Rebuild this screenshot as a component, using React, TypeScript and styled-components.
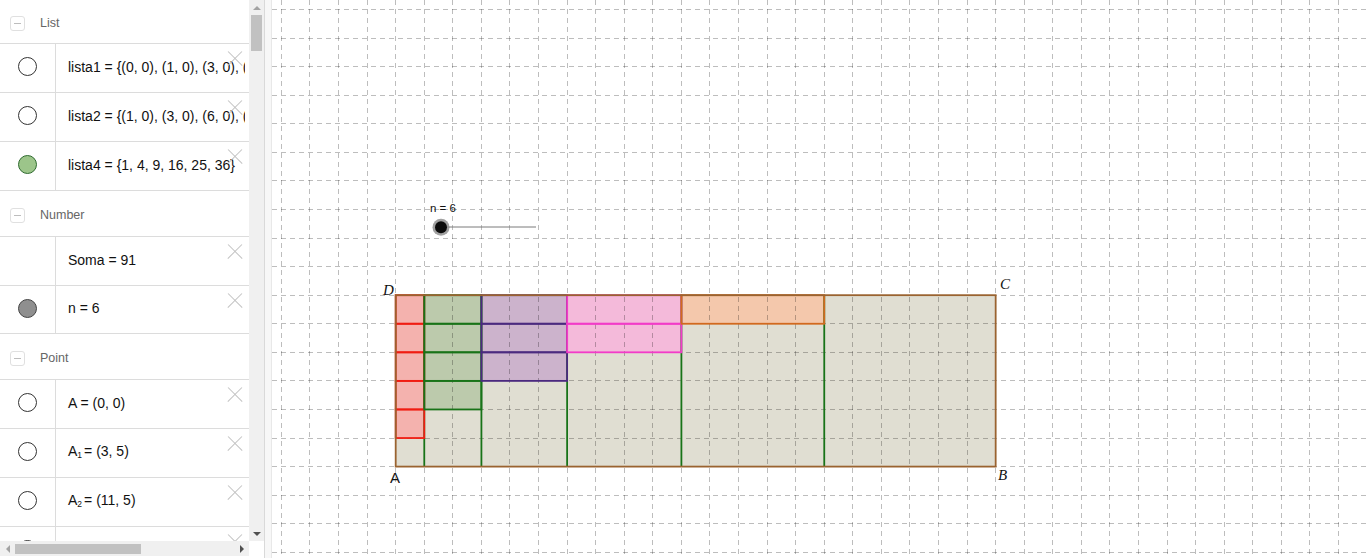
import React from 'react';
import styled, { createGlobalStyle } from 'styled-components';

const GlobalStyle = createGlobalStyle`
  html, body {
    margin: 0;
    padding: 0;
    background: #fff;
    overflow: hidden;
  }
  body {
    font-family: "Liberation Sans", Arial, sans-serif;
  }
`;

const Page = styled.div`
  display: flex;
  width: 1366px;
  height: 558px;
`;

const AlgebraPanel = styled.aside`
  flex: none;
  width: 264px;
  display: grid;
  grid-template-columns: 249px 15px;
  grid-template-rows: 541px 15px 2px;
`;

const ItemList = styled.div`
  overflow: hidden;
  background: #fff;
`;

const SectionHeader = styled.div<{ $h: number }>`
  display: flex;
  align-items: center;
  height: ${(p) => p.$h}px;
  padding-top: 3px;
  box-sizing: border-box;
  border-bottom: 1px solid #dcdcdc;
  color: #666;
  font-size: 12.5px;
`;

const CollapseBox = styled.span`
  width: 15px;
  height: 15px;
  margin: 0 15px 0 10px;
  box-sizing: border-box;
  border: 1px solid #e0e0e0;
  border-radius: 3px;
  display: flex;
  align-items: center;
  justify-content: center;
  &::after {
    content: '';
    width: 7px;
    height: 1px;
    background: #bdbdbd;
  }
`;

const ItemRow = styled.div<{ $h?: number }>`
  position: relative;
  display: flex;
  height: ${(p) => p.$h ?? 49}px;
  padding: 0 4px 3px 0;
  box-sizing: border-box;
  border-bottom: 1px solid #dcdcdc;
`;

const MarkerCell = styled.div`
  flex: none;
  width: 56px;
  margin-bottom: -3px;
  padding-bottom: 3px;
  box-sizing: border-box;
  border-right: 1px solid #dcdcdc;
  display: flex;
  align-items: center;
  justify-content: center;
`;

const Marker = styled.span<{ $fill: string; $edge: string }>`
  width: 19px;
  height: 19px;
  box-sizing: border-box;
  border-radius: 50%;
  border: 1px solid ${(p) => p.$edge};
  background: ${(p) => p.$fill};
`;

const Formula = styled.div`
  flex: 1;
  min-width: 0;
  display: flex;
  align-items: center;
  padding-left: 12px;
  font-size: 14px;
  color: #111;
  white-space: nowrap;
  overflow: hidden;
`;

const Sub = styled.sub`
  font-size: 8.5px;
  vertical-align: -2px;
  margin-right: 2px;
`;

const DeleteMark = styled.span`
  position: absolute;
  right: 7px;
  top: 7px;
  width: 15px;
  height: 15px;
  &::before,
  &::after {
    content: '';
    position: absolute;
    left: -2px;
    top: 7px;
    width: 20px;
    height: 1.4px;
    background: #c2c2c2;
  }
  &::before {
    transform: rotate(45deg);
  }
  &::after {
    transform: rotate(-45deg);
  }
`;

const VScroll = styled.div`
  background: #f0f0f0;
  display: flex;
  flex-direction: column;
`;

const HScroll = styled.div`
  background: #f0f0f0;
  display: flex;
  align-items: center;
`;

const ScrollCorner = styled.div`
  background: #fff;
`;

const ArrowButton = styled.span<{ $dir: 'up' | 'down' | 'left' | 'right'; $dim?: boolean }>`
  flex: none;
  width: 15px;
  height: 15px;
  display: flex;
  align-items: center;
  justify-content: center;
  &::after {
    content: '';
    width: 0;
    height: 0;
    ${(p) => {
      const c = p.$dim ? '#a3a3a3' : '#505050';
      switch (p.$dir) {
        case 'up':
          return `border-left: 4px solid transparent; border-right: 4px solid transparent; border-bottom: 4px solid ${c};`;
        case 'down':
          return `border-left: 4px solid transparent; border-right: 4px solid transparent; border-top: 4px solid ${c};`;
        case 'left':
          return `border-top: 4px solid transparent; border-bottom: 4px solid transparent; border-right: 4px solid ${c};`;
        default:
          return `border-top: 4px solid transparent; border-bottom: 4px solid transparent; border-left: 4px solid ${c};`;
      }
    }}
  }
`;

const VThumb = styled.span`
  width: 11px;
  height: 36px;
  margin-left: 2px;
  background: #c1c1c1;
`;

const HThumb = styled.span`
  width: 126px;
  height: 10px;
  background: #c1c1c1;
`;

const Filler = styled.span`
  flex: 1;
`;

const Splitter = styled.div`
  flex: none;
  width: 6px;
  background: #f7f7f7;
  border-left: 1px solid #d9d9d9;
  border-right: 1px solid #e8e8e8;
`;

const GraphicsView = styled.main`
  flex: 1;
  position: relative;
  background: #fff;
  overflow: hidden;
`;

const Board = styled.svg`
  display: block;
  width: 100%;
  height: 100%;
`;

type Item = {
  marker?: { fill: string; edge: string };
  text: React.ReactNode;
  h?: number;
};

type Section = { title: string; h: number; items: Item[] };

const hollow = { fill: '#fff', edge: '#333' };

const sections: Section[] = [
  {
    title: 'List',
    h: 44,
    items: [
      { marker: hollow, text: 'lista1 = {(0, 0), (1, 0), (3, 0), (6, 0), (10, 0), (15, 0)}' },
      { marker: hollow, text: 'lista2 = {(1, 0), (3, 0), (6, 0), (10, 0), (15, 0), (21, 0)}' },
      { marker: { fill: '#9cc58a', edge: '#2f6b2f' }, text: 'lista4 = {1, 4, 9, 16, 25, 36}' },
    ],
  },
  {
    title: 'Number',
    h: 46,
    items: [
      { text: 'Soma = 91' },
      { marker: { fill: '#8f8f8f', edge: '#444' }, text: 'n = 6', h: 48 },
    ],
  },
  {
    title: 'Point',
    h: 46,
    items: [
      { marker: hollow, text: 'A = (0, 0)' },
      { marker: hollow, text: <span>A<Sub>1</Sub>= (3, 5)</span> },
      { marker: hollow, text: <span>A<Sub>2</Sub>= (11, 5)</span> },
      { marker: hollow, text: '' },
    ],
  },
];

// board geometry, page pixels
const LEFT = 272;
const U = 28.57;
const OX = 395.7;
const OY = 466.6;
const px = (x: number) => OX + x * U - LEFT;
const py = (y: number) => OY - y * U;

const columns = [
  { fill: '#f4b2ae', edge: '#f01c12' },
  { fill: '#bccaac', edge: '#187318' },
  { fill: '#ccb3cc', edge: '#4b2a7f' },
  { fill: '#f4bada', edge: '#f23bc8' },
  { fill: '#f4c8ac', edge: '#d2691e' },
];

const squares = columns.flatMap((c, i) => {
  const k = i + 1;
  const start = (k * (k - 1)) / 2;
  return Array.from({ length: 6 - k }, (_, j) => ({
    x: px(start),
    y: py(6 - j),
    w: k * U,
    h: U,
    ...c,
  }));
});

const GridLines: React.FC = () => {
  const lines: React.ReactNode[] = [];
  for (let k = -4; k <= 34; k++) {
    const x = px(k);
    lines.push(<line key={`v${k}`} x1={x} y1={0} x2={x} y2={558} />);
  }
  for (let k = -3; k <= 16; k++) {
    const y = py(k);
    lines.push(<line key={`h${k}`} x1={0} y1={y} x2={1100} y2={y} />);
  }
  return (
    <g stroke="#000" strokeOpacity={0.26} strokeWidth={1} strokeDasharray="5 4" shapeRendering="crispEdges">
      {lines}
    </g>
  );
};

const Construction: React.FC = () => (
  <Board>
    <rect x={px(0)} y={py(6)} width={21 * U} height={6 * U} fill="#e0ded2" />
    {squares.map((s, i) => (
      <rect key={`f${i}`} x={s.x} y={s.y} width={s.w} height={s.h} fill={s.fill} />
    ))}
    <GridLines />
    {[1, 3, 6, 10, 15].map((x) => (
      <line key={`c${x}`} x1={px(x)} y1={py(0)} x2={px(x)} y2={py(6)} stroke="#187318" strokeWidth={1.8} />
    ))}
    {squares.map((s, i) => (
      <rect key={`e${i}`} x={s.x} y={s.y} width={s.w} height={s.h} fill="none" stroke={s.edge} strokeWidth={1.8} />
    ))}
    <rect x={px(0)} y={py(6)} width={21 * U} height={6 * U} fill="none" stroke="#9a6330" strokeWidth={1.8} />

    <g fontFamily='"Liberation Serif", serif' fontStyle="italic" fontSize={15} fill="#111">
      <text x={383 - LEFT} y={295}>D</text>
      <text x={1000 - LEFT} y={289}>C</text>
      <text x={998 - LEFT} y={480}>B</text>
    </g>
    <text x={390 - LEFT} y={483} fontFamily='"Liberation Sans", sans-serif' fontSize={15} fill="#111">
      A
    </text>

    <text x={430 - LEFT} y={212} fontFamily='"Liberation Sans", sans-serif' fontSize={11.5} fill="#111">
      n = 6
    </text>
    <line x1={441 - LEFT} y1={227} x2={536 - LEFT} y2={227} stroke="#7a7a7a" strokeWidth={1} />
    <circle cx={441 - LEFT} cy={227.3} r={8.5} fill="#8a8a8a" fillOpacity={0.8} />
    <circle cx={441 - LEFT} cy={227.3} r={6} fill="#0d0d0d" />
  </Board>
);

export default function App() {
  return (
    <>
      <GlobalStyle />
      <Page>
        <AlgebraPanel>
          <ItemList>
            {sections.map((sec) => (
              <React.Fragment key={sec.title}>
                <SectionHeader $h={sec.h}>
                  <CollapseBox />
                  {sec.title}
                </SectionHeader>
                {sec.items.map((it, i) => (
                  <ItemRow key={i} $h={it.h}>
                    <MarkerCell>
                      {it.marker && <Marker $fill={it.marker.fill} $edge={it.marker.edge} />}
                    </MarkerCell>
                    <Formula>{it.text}</Formula>
                    <DeleteMark />
                  </ItemRow>
                ))}
              </React.Fragment>
            ))}
          </ItemList>
          <VScroll>
            <ArrowButton $dir="up" $dim />
            <VThumb />
            <Filler />
            <ArrowButton $dir="down" />
          </VScroll>
          <HScroll>
            <ArrowButton $dir="left" $dim />
            <HThumb />
            <Filler />
            <ArrowButton $dir="right" />
          </HScroll>
          <ScrollCorner />
        </AlgebraPanel>
        <Splitter />
        <GraphicsView>
          <Construction />
        </GraphicsView>
      </Page>
    </>
  );
}
